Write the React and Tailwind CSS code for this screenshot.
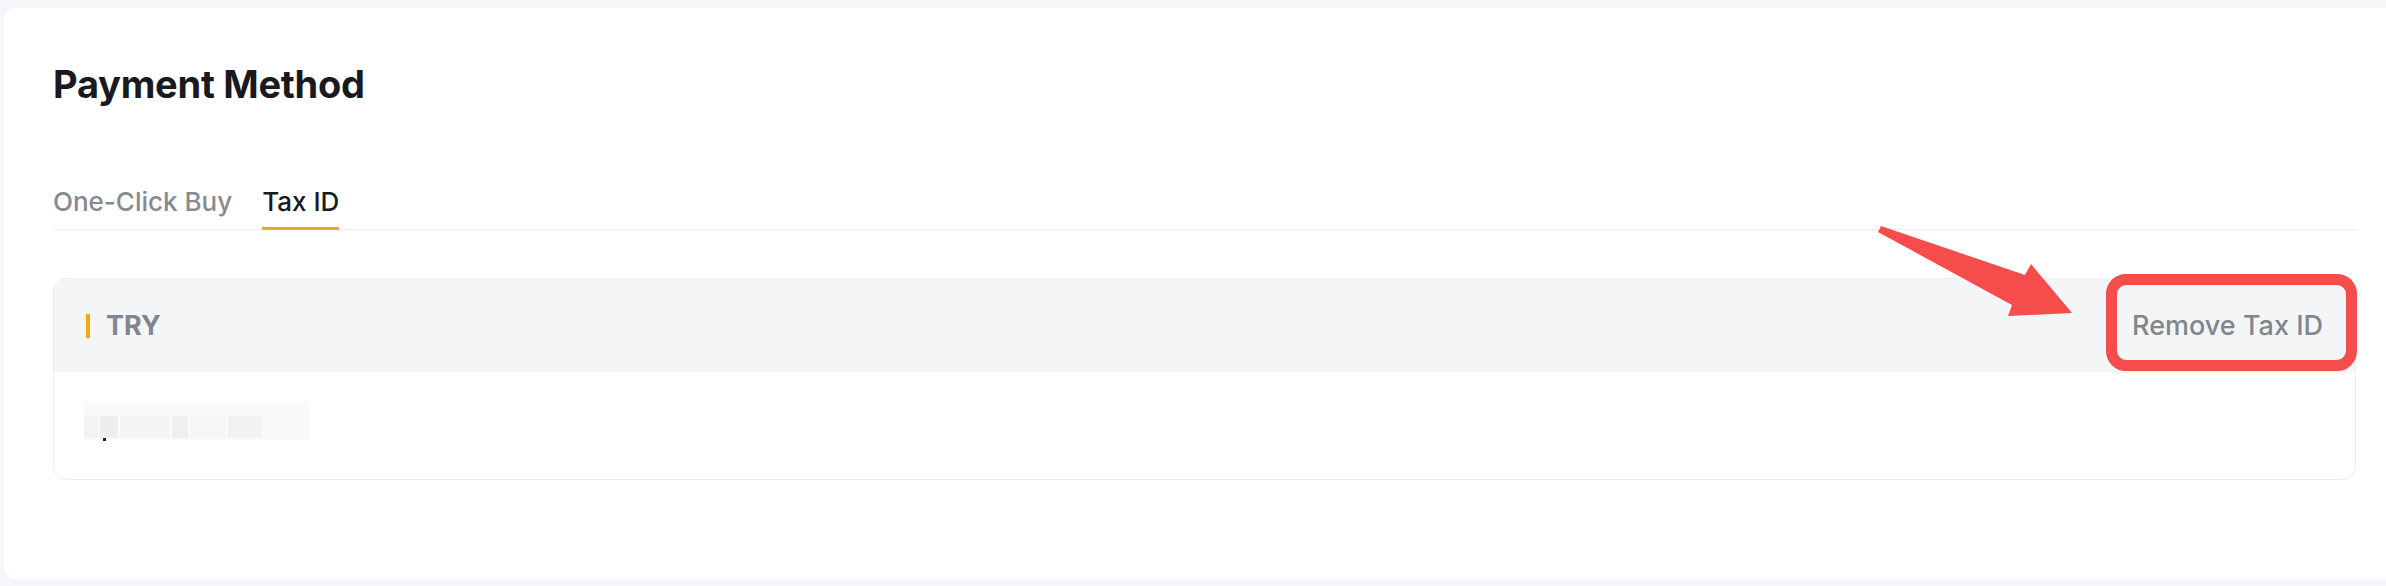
import React from "react";

const tabs = [
  { label: "One-Click Buy", active: false },
  { label: "Tax ID", active: true },
];

const App = () => {
  return (
    <div className="relative h-[586px] overflow-hidden bg-[#f5f6fa] pt-[8px] pl-[4px] pb-[7px] font-[Inter,sans-serif]">
      {/* Main card */}
      <div className="h-full bg-white rounded-l-[12px] pl-[49px] pr-[30px] pt-[52px]">
        <h1 className="text-[38px] leading-[48px] font-bold tracking-[-0.25px] text-[#181a20]">
          Payment Method
        </h1>

        {/* Tabs */}
        <div className="mt-[76px] flex gap-[30px] border-b border-[#eaecef]">
          {tabs.map((t) => (
            <div
              key={t.label}
              className={
                t.active
                  ? "-mb-px pb-[7px] border-b-[3px] border-[#e9a92a] text-[26px] leading-[36px] font-medium text-[#181a20]"
                  : "-mb-px pb-[7px] border-b-[3px] border-transparent text-[26px] leading-[36px] font-medium text-[#858a91]"
              }
            >
              {t.label}
            </div>
          ))}
        </div>

        {/* Tax ID card */}
        <div className="mt-[48px] border border-[#eaecef] rounded-[14px] overflow-hidden">
          <div className="h-[93px] bg-[#f4f5f7] px-8 flex items-center justify-between">
            <div className="flex items-center gap-4">
              <div className="w-[4px] h-[24px] bg-[#f4a90a]" />
              <span className="text-[27px] leading-none font-bold text-[#80868d]">TRY</span>
            </div>
            <span className="text-[27px] leading-none font-medium text-[#80868d]">
              Remove Tax ID
            </span>
          </div>
          <div className="h-[107px] px-[30px] pt-[29px]">
            {/* redacted value */}
            <div className="relative w-[226px] h-[39px] bg-[#fafafa] flex items-end gap-[2px] pb-[2px]">
              <div className="w-[14px] h-[22px] bg-[#f3f3f3]" />
              <div className="w-[18px] h-[22px] bg-[#eeeeee]" />
              <div className="w-[50px] h-[22px] bg-[#f5f5f5]" />
              <div className="w-[16px] h-[22px] bg-[#efefef]" />
              <div className="w-[36px] h-[22px] bg-[#f6f6f6]" />
              <div className="w-[34px] h-[22px] bg-[#f2f2f2]" />
              <div className="absolute left-[19px] bottom-[-1px] w-[3px] h-[3px] bg-[#1e2329]" />
            </div>
          </div>
        </div>
      </div>

      {/* Annotation: arrow + highlight */}
      <svg
        className="absolute left-[1870px] top-[220px]"
        width="210"
        height="100"
        viewBox="0 0 210 100"
      >
        <polygon
          points="11,6 155,55 161,44 202,93 138,96 142,85 8,12"
          fill="#f54c4c"
        />
      </svg>
      <div className="absolute left-[2106px] top-[274px] w-[251px] h-[97px] border-[11px] border-[#f54c4c] rounded-[20px]" />
    </div>
  );
};

export default App;
